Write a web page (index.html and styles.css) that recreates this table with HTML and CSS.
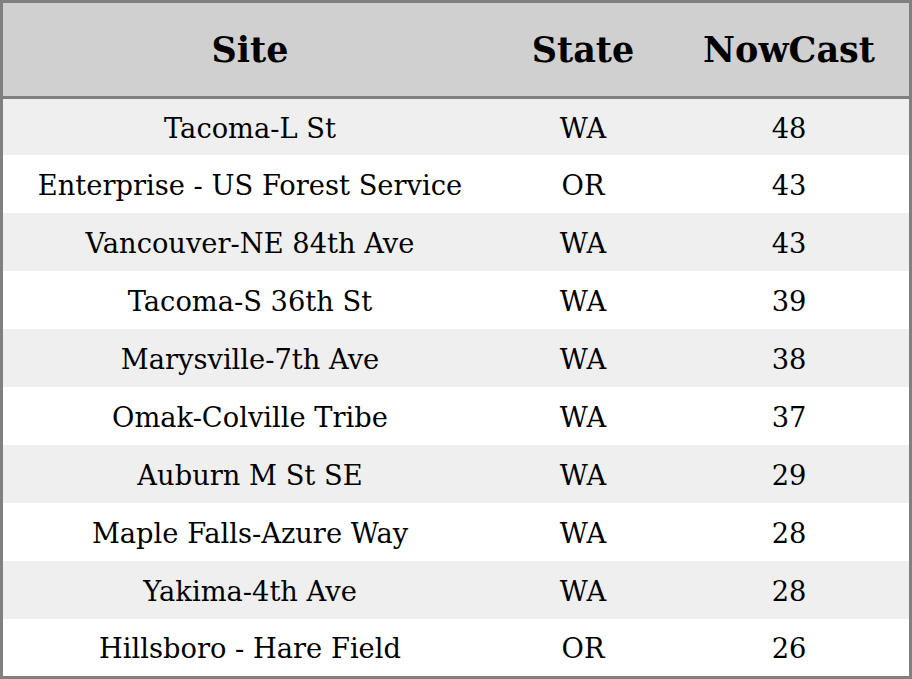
FILE: index.html
```html
<!DOCTYPE html>
<html>
<head>
<meta charset="utf-8">
<link rel="stylesheet" href="styles.css">
</head>
<body>
<table class="grid">
  <colgroup>
    <col class="c-site">
    <col class="c-state">
    <col class="c-now">
  </colgroup>
  <thead>
    <tr><th>Site</th><th>State</th><th>NowCast</th></tr>
  </thead>
  <tbody>
    <tr class="first"><td>Tacoma-L St</td><td>WA</td><td>48</td></tr>
    <tr><td>Enterprise - US Forest Service</td><td>OR</td><td>43</td></tr>
    <tr><td>Vancouver-NE 84th Ave</td><td>WA</td><td>43</td></tr>
    <tr><td>Tacoma-S 36th St</td><td>WA</td><td>39</td></tr>
    <tr><td>Marysville-7th Ave</td><td>WA</td><td>38</td></tr>
    <tr><td>Omak-Colville Tribe</td><td>WA</td><td>37</td></tr>
    <tr><td>Auburn M St SE</td><td>WA</td><td>29</td></tr>
    <tr><td>Maple Falls-Azure Way</td><td>WA</td><td>28</td></tr>
    <tr><td>Yakima-4th Ave</td><td>WA</td><td>28</td></tr>
    <tr class="last"><td>Hillsboro - Hare Field</td><td>OR</td><td>26</td></tr>
  </tbody>
</table>
</body>
</html>
```
FILE: styles.css
```css
html, body {
  margin: 0;
  padding: 0;
  background: #ffffff;
}
.grid {
  width: 912px;
  border-collapse: separate;
  border-spacing: 0;
  border: 3px solid #808080;
  table-layout: fixed;
  font-family: "DejaVu Serif", serif;
  color: #000;
}
.c-site { width: 494px; }
.c-state { width: 172px; }
.c-now { width: 240px; }
.grid thead tr { height: 96px; }
.grid th {
  height: 96px;
  box-sizing: border-box;
  padding: 0;
  background: #d0d0d0;
  border-bottom: 3px solid #808080;
  font-size: 35px;
  font-weight: bold;
  text-align: center;
  vertical-align: middle;
}
.grid td {
  box-sizing: border-box;
  padding: 2px 0 0 0;
  font-size: 27.3px;
  text-align: center;
  vertical-align: middle;
  height: 58px;
}
.grid tr.first td { height: 56px; }
.grid tr.last td { height: 57px; }
.grid tbody tr:nth-child(odd) td { background: #efefef; }
.grid tbody tr:nth-child(even) td { background: #ffffff; }
```
